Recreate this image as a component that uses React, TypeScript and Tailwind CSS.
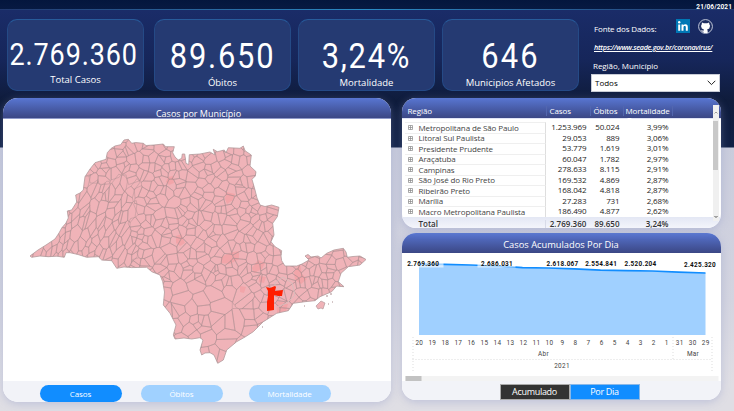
import React from 'react';

type Pt = [number, number];

const STATE: Pt[] = [
  [30, 256], [38, 250], [46, 245], [55, 239], [59, 233], [61.7, 228], [66, 223], [68.3, 218], [67.3, 211], [71.7, 210], [76.7, 202], [75.7, 195], [80, 193], [83.3, 190],
  [84, 184], [85, 176.7], [90, 169], [95, 162.7], [106, 159.3], [107.3, 152.7], [111, 148.5], [115, 146], [120.7, 144.7], [124, 140], [128.3, 139.3],
  [131.7, 143.3], [136, 142.6], [143.3, 143.3], [146, 145.5], [154, 145], [163.3, 144], [165.7, 146.7], [174.3, 146.7], [172.7, 152.7], [175, 157], [178.3, 160],
  [181.7, 158.3], [182.3, 154], [184.7, 154], [186, 163.3], [188.7, 164.7], [189.3, 154.7], [200, 154], [210, 152], [215, 155], [213.3, 149.3],
  [217.3, 151.7], [224.3, 150], [226, 152.7], [228.3, 147.7], [240, 148.3], [243.3, 146], [245, 150.7], [251.3, 155], [250, 166], [256, 171.7],
  [255.3, 176], [252, 179.3], [255, 190], [257, 198], [260, 205], [265, 206.5], [271.7, 205], [279, 207.3], [277.3, 216.7], [272.7, 223.3], [274, 235], [271, 241.7],
  [275, 246.7], [281.7, 250.7], [281, 256], [281.7, 260.7], [285, 266], [296.7, 266], [302, 264], [309, 260], [305, 256], [308, 254.5], [311, 257], [318, 256],
  [321, 258], [326.7, 253.3], [334, 250], [343.3, 248.3], [346, 252], [347.3, 257.3], [353, 256.5], [360, 256], [366, 259.5], [360, 265], [348.3, 266.7], [341, 273.3],
  [338.3, 281.7], [344, 286.7], [336.7, 286], [331.7, 291.7], [320, 296.7], [315, 300.7], [305, 301.7], [293.3, 303.3], [288.3, 310.7], [276.7, 313.3],
  [263.3, 321.7], [253.3, 331.7], [245, 337], [236.7, 341.7], [226.7, 350], [223.3, 360], [217.7, 363.3], [214, 355], [210, 352.7], [205, 353], [201.7, 355], [200, 350],
  [203, 340], [200, 337.7], [191.7, 339], [184, 338], [175, 339], [173.3, 335], [176, 325], [170, 313.3], [163.3, 305], [164.5, 292], [162.7, 281.7], [160, 275],
  [151.7, 271.7], [146.7, 267.3], [131.7, 267.6], [124, 267], [116.7, 268.3], [111.7, 260.7], [101.7, 260], [98.3, 256.7], [86.7, 257.3], [78, 254.5], [70, 252.7],
  [66, 252.7], [64.3, 257.3], [57, 256.2], [48.3, 256.7], [40, 256], [31.7, 257.3],
];

const pathOf = (p: Pt[]) => 'M' + p.map((q) => q[0].toFixed(1) + ' ' + q[1].toFixed(1)).join('L') + 'Z';

/* Municipal boundaries: cells around scattered town seats, skewed along the river valleys in the west. */
function municipalities(): string {
  let seed = 11;
  const rnd = () => {
    seed = (seed * 16807) % 2147483647;
    return seed / 2147483647;
  };
  const sites: Pt[] = [];
  let row = 0;
  for (let y = 134; y < 372; y += 7.3, row++) {
    for (let x = 24 + (row % 2) * 4; x < 374; x += 7.4) {
      const px = x + (rnd() - 0.5) * 11;
      const py = y + (rnd() - 0.5) * 11;
      const sparse = (py > 285 && px < 262 && rnd() < 0.5) || rnd() < 0.12;
      if (!sparse) sites.push([px, py]);
    }
  }
  const k = (p: Pt): number => (p[0] < 135 && p[1] > 180 ? 0.4 : 1);
  const out: string[] = [];
  for (const s of sites) {
    const w = k(s);
    let cell: Pt[] = [[s[0] - 14, s[1] - 14], [s[0] + 14, s[1] - 14], [s[0] + 14, s[1] + 14], [s[0] - 14, s[1] + 14]];
    for (const o of sites) {
      const dx = o[0] - s[0];
      const dy = o[1] - s[1];
      if ((dx === 0 && dy === 0) || Math.abs(dx) > 28 || Math.abs(dy) > 28) continue;
      const shear = w < 1 ? 0.3 : 0;
      const nx = dx + dy * shear;
      const ny = dy * w + dx * shear;
      const c = nx * (s[0] + dx / 2) + ny * (s[1] + dy / 2);
      const next: Pt[] = [];
      for (let i = 0; i < cell.length; i++) {
        const a = cell[i];
        const b = cell[(i + 1) % cell.length];
        const da = nx * a[0] + ny * a[1] - c;
        const db = nx * b[0] + ny * b[1] - c;
        if (da <= 0) next.push(a);
        if ((da < 0 && db > 0) || (da > 0 && db < 0)) {
          const t = da / (da - db);
          next.push([a[0] + (b[0] - a[0]) * t, a[1] + (b[1] - a[1]) * t]);
        }
      }
      cell = next;
    }
    if (cell.length > 2) out.push(pathOf(cell));
  }
  return out.join('');
}

const CELLS = municipalities();
const OUTLINE = pathOf(STATE);

function StateMap() {
  return (
    <svg className="block h-[262px] w-full" viewBox="3 119 388 262">
      <defs>
        <clipPath id="state"><path d={OUTLINE} /></clipPath>
      </defs>
      <path d={OUTLINE} fill="#f0b3b8" />
      <g clipPath="url(#state)">
        <g fill="#f2a5a9">
          <path d="M168 177l5 -1 1 7 -5 2 -3 -3z" />
          <path d="M176 236l5 -2 4 9 -5 3 -4 -3z" />
          <path d="M226 192l9 2 -2 6 -6 4 -2 -5z" />
          <path d="M221 257l8 -4 10 -2 0 8 -9 5 -9 -1z" />
          <path d="M252 268l6 -8 7 3 -3 6 -8 4z" />
          <path d="M294 272l6 -8 2 10 5 5 -6 5 -6 -4z" />
          <path d="M259 276l7 1 -2 6 -5 -1z" />
          <path d="M240 286l6 1 -2 6 -4 -1z" />
          <path d="M276 300l12 4 -2 7 -9 2z" />
        </g>
        <path d={CELLS} fill="none" stroke="#a88e90" strokeWidth="0.42" />
        <path d="M275 290l0 -7 8 -6 9 6 3 12 -8 8 -10 4" fill="none" stroke="#d9bcbc" strokeWidth="1" />
      </g>
      <path d={OUTLINE} fill="none" stroke="#b39a9c" strokeWidth="0.8" />
      <path d="M316 306l5 -5 4 2 -2 6 -2 -1 -3 1z" fill="#f0b3b8" stroke="#b39a9c" strokeWidth="0.7" />
      <path d="M262 327h1M304 306h1M328 304h1M332 302h1M326 296h2M330 294h2" stroke="#a98c8e" />
      <path d="M266 287l4 1 5 -2 1 1 -1 4 8 -1 -1 6 -4 0 -4 -1 0 6 0 9 -7 1 0 -9 1 -6 0 -5z" fill="#ff1e00" />
    </svg>
  );
}

const CARDS = [
  { value: '2.769.360', label: 'Total Casos', box: 'w-[137px]', num: 'mt-[18px] text-[31px] tracking-[1px] mr-[3px]', cap: 'mt-[2px]' },
  { value: '89.650', label: 'Óbitos', box: 'ml-[10px] w-[137px]', num: 'mt-[19px] text-[35.5px] tracking-[2px]', cap: 'mt-[4px]' },
  { value: '3,24%', label: 'Mortalidade', box: 'ml-[7px] w-[137px]', num: 'mt-[19px] text-[35.5px] tracking-[2px]', cap: 'mt-[4px]' },
  { value: '646', label: 'Municipios Afetados', box: 'ml-[7px] w-[137px]', num: 'mt-[19px] text-[35.5px] tracking-[2.4px]', cap: 'mt-[4px]' },
];

const ROWS = [
  ['Metropolitana de São Paulo', '1.253.969', '50.024', '3,99%'],
  ['Litoral Sul Paulista', '29.053', '889', '3,06%'],
  ['Presidente Prudente', '53.779', '1.619', '3,01%'],
  ['Araçatuba', '60.047', '1.782', '2,97%'],
  ['Campinas', '278.633', '8.115', '2,91%'],
  ['São José do Rio Preto', '169.532', '4.869', '2,87%'],
  ['Ribeirão Preto', '168.042', '4.818', '2,87%'],
  ['Marília', '27.283', '731', '2,68%'],
  ['Macro Metropolitana Paulista', '186.490', '4.877', '2,62%'],
];

function RegionTable() {
  return (
    <section className="relative flex h-[130px] flex-col overflow-hidden rounded-[14px] bg-white shadow-[0_2px_8px_#8c96c866]">
      <div className="flex h-[21px] shrink-0 items-start border-b border-[#dfe3f5] bg-linear-to-b from-[#5876d2] to-[#3b4785] pt-[8px] text-[8px] leading-[10px] tracking-[-0.1px] text-white">
        <span className="w-[144px] pl-[6px]">Região</span>
        <span className="w-[44px] border-l border-[#5266ae] pl-[3px]">Casos</span>
        <span className="w-[33px] border-l border-[#5266ae] pl-[3px]">Óbitos</span>
        <span className="w-[50px] border-x border-[#5266ae] pl-[2px]">Mortalidade</span>
      </div>
      <svg className="absolute top-[20px] left-[225px] h-[2px] w-[5px]" viewBox="0 0 5 2"><path d="M0 0h5L2.5 2z" fill="#fff" /></svg>
      <div className="flex h-[98px] shrink-0 flex-col pt-[3px]">
        {ROWS.map((r) => (
          <div key={r[0]} className="flex h-[10.5px] shrink-0 items-center text-[8px] leading-[10px] tracking-[-0.12px] text-[#252423]">
            <div className="ml-[3px] flex h-full w-[141px] items-center border-t border-r border-t-[#efefef] border-r-[#dedede] text-[#444]">
              <svg className="ml-[3px] mr-[6px] size-[5px]" viewBox="0 0 5 5"><path d="M.5 .5h4v4h-4zM2.5 .5v4M.5 2.5h4" fill="none" stroke="#888" strokeWidth=".7" /></svg>
              <span className="whitespace-nowrap">{r[0]}</span>
            </div>
            <span className="w-[41px] text-right">{r[1]}</span>
            <span className="w-[33px] text-right">{r[2]}</span>
            <span className="w-[49px] text-right">{r[3]}</span>
          </div>
        ))}
      </div>
      <div className="flex h-[11px] items-center bg-linear-to-b from-[#e3e7f4] to-[#f4f5fb] pt-[3px] text-[8px] leading-[8px] font-semibold text-[#333]">
        <span className="w-[144px] border-r border-[#d8dbe8] pl-[17px]">Total</span>
        <span className="w-[41px] text-right tracking-[0.05px] whitespace-nowrap">2.769.360</span>
        <span className="w-[33px] text-right">89.650</span>
        <span className="w-[49px] text-right">3,24%</span>
      </div>
      <div className="absolute top-[7px] right-[2px] flex h-[116px] w-[6px] flex-col items-center justify-between bg-[#f0f0f0]">
        <svg className="h-[16px] w-[6px]" viewBox="0 0 6 16"><path d="M1.5 8.5l1.5-1.5 1.5 1.5" fill="none" stroke="#888" strokeWidth=".8" /></svg>
        <div className="mb-auto h-[49px] w-[5px] bg-[#c8c8c8]" />
        <svg className="h-[9px] w-[6px]" viewBox="0 0 6 9"><path d="M1.5 4l1.5 1.5 1.5-1.5" fill="none" stroke="#555" /></svg>
      </div>
    </section>
  );
}

const DAYS = ['20', '19', '18', '17', '16', '15', '14', '13', '12', '11', '10', '9', '8', '7', '6', '5', '4', '3', '2', '1', '31', '30', '29'];
const POINTS: { x: number; y: number; t: string }[] = [
  { x: 422.7, y: 266, t: '2.769.360' },
  { x: 496.5, y: 266, t: '2.686.031' },
  { x: 562, y: 266, t: '2.618.067' },
  { x: 600.7, y: 266, t: '2.554.841' },
  { x: 640, y: 266, t: '2.520.204' },
  { x: 699.5, y: 267, t: '2.425.320' },
];

function DailyChart() {
  return (
    <svg className="block h-[128px] w-full" viewBox="401.5 253 319 128" fontFamily="Roboto, sans-serif">
      <path d="M418.5 264L444 264.3 470 265 496 266 522 267.6 548 268 574 268.8 600 270.2 626 270.7 652 271 678 272.2 705 273V335H418.5Z" fill="#a0d0ff" />
      <path d="M418.5 264L444 264.3 470 265 496 266 522 267.6 548 268 574 268.8 600 270.2 626 270.7 652 271 678 272.2 705 273" fill="none" stroke="#118dff" strokeWidth="1.7" />
      <g fill="#fff" fillOpacity=".6">
        <rect x="405" y="260" width="38" height="7.5" />
        <rect x="477" y="260" width="38" height="7.5" />
      </g>
      <g fontSize="6.4" fontWeight="700" fill="#111" textAnchor="middle" letterSpacing=".3">
        {POINTS.map((p) => <text key={p.t} x={p.x} y={p.y}>{p.t}</text>)}
      </g>
      <g fontSize="6.4" fill="#444" textAnchor="middle" letterSpacing=".3">
        {DAYS.map((d, i) => <text key={d} x={418.8 + i * 13.02} y="345">{d}</text>)}
        <text x="543" y="356">Abr</text>
        <text x="692.5" y="356">Mar</text>
        <text x="561.5" y="368.3">2021</text>
      </g>
      <path d="M412.5 337V372M711.5 337V372M672.5 337V359M412 359.5H712" fill="none" stroke="#ddd" strokeDasharray="1 2" />
      <rect x="405" y="376" width="313" height="5" fill="#f3f3f3" />
      <rect x="405" y="376" width="16" height="5" fill="#c2c2c2" />
    </svg>
  );
}

export default function App() {
  return (
    <div
      className="flex h-[411px] w-[734px] flex-col overflow-hidden bg-[linear-gradient(to_bottom,#04163d_0px,#071a42_9px,#1a2c68_10px,#16265a_60px,#0f1c3c_100px,#102045_147px,#c9ccdc_148px,#d3d4e0_300px,#dfdee4_385px,#dfdee4_411px)] font-['Open_Sans','Noto_Sans',sans-serif]"
    >
      <div className="flex h-[10px] shrink-0 justify-end pt-[3px] pr-[2px] text-[6.5px] leading-[8px] font-bold tracking-[0.1px] text-white font-[Roboto,sans-serif]">21/06/2021</div>
      <div className="h-px w-full shrink-0 -mt-px bg-linear-to-r from-[#22396f] via-[#2a8bc4] to-[#22396f]" />
      <header className="flex h-[88px] shrink-0 pt-[9px] pl-[7px]">
        {CARDS.map((c) => (
          <div key={c.label} className={`flex h-[72px] shrink-0 flex-col items-center rounded-[10px] border border-[#254a86] border-t-[#285b9a] bg-[#253a72] text-white ${c.box}`}>
            <div className={`h-[34px] scale-x-[0.87] leading-[34px] whitespace-nowrap font-[Roboto,sans-serif] ${c.num}`}>{c.value}</div>
            <div className={`text-[9.5px] leading-[12px] whitespace-nowrap ${c.cap}`}>{c.label}</div>
          </div>
        ))}
        <div className="ml-[10px] flex w-[131px] flex-col text-[8px] leading-[10px] text-white">
          <div className="flex h-[18px] items-start pl-[5px]">
            <span className="w-[82px] pt-[5px] tracking-[-0.15px]">Fonte dos Dados:</span>
            <svg className="size-[14px]" viewBox="0 0 14 14">
              <rect width="14" height="14" fill="#0077b5" />
              <circle cx="3.2" cy="3.3" r="1.2" fill="#fff" />
              <path d="M2.2 5.4h2v6.4h-2zM5.5 5.4h1.9v.9c.4-.7 1.1-1.1 2-1.1 1.9 0 2.4 1.2 2.4 3v3.6h-2V8.6c0-.9-.1-1.6-1.1-1.6s-1.2.7-1.2 1.6v3.2h-2z" fill="#fff" />
            </svg>
            <svg className="ml-[8px] size-[15px]" viewBox="0 0 16 16">
              <circle cx="8" cy="8" r="7.4" fill="#1f2f62" stroke="#c9cfdf" strokeWidth="1" />
              <path d="M4.2 3.6l2 .9h3.6l2-.9.3 1.9.8 1.8-.9 2.7-2.3 1.2.6 1.2v2.4H5.9v-1.2l-1.8-.4-.8-1.2 1.2.1.9.7.7-.9.2-.6-2.2-1.2-.9-2.7.8-1.8z" fill="#fff" />
            </svg>
          </div>
          <div className="mt-[5px] pl-[5px] text-[7.2px] tracking-[-0.28px] whitespace-nowrap underline italic font-semibold">https://www.seade.gov.br/coronavirus/</div>
          <div className="mt-[9px] pl-[4px] tracking-[-0.05px]">Região, Município</div>
          <div className="mt-[3px] ml-[2px] flex h-[18px] items-center justify-between border border-[#c8ccd6] bg-white pr-[3px] pl-[3px] text-[8px] text-black">
            <span>Todos</span>
            <svg className="h-[6px] w-[9px]" viewBox="0 0 9 6"><path d="M.7 .8l3.8 3.8L8.3 .8" fill="none" stroke="#222" strokeWidth="1" /></svg>
          </div>
        </div>
      </header>

      <main className="flex grow items-start pl-[3px]">
        <section className="flex h-[304px] w-[388px] flex-col overflow-hidden rounded-[15px] bg-white shadow-[0_2px_8px_#8c96c866]">
          <div className="h-[21px] shrink-0 border-b border-[#8e99c9] bg-linear-to-b from-[#5876d2] to-[#3b4785] pt-[10px] pl-[3px] text-center text-[9px] leading-[11px] text-white">Casos por Município</div>
          <StateMap />
          <div className="flex h-[21px] items-start bg-[#f2f3f8] pt-[4px] pl-[36.5px] text-center text-[8px] leading-[18px] tracking-[-0.1px] text-white">
            <div className="h-[17px] w-[82px] rounded-full bg-[#118dff]">Casos</div>
            <div className="ml-[19px] h-[17px] w-[82px] rounded-full bg-[#a0d1ff]">Óbitos</div>
            <div className="ml-[26px] h-[17px] w-[82px] rounded-full bg-[#a0d1ff]">Mortalidade</div>
          </div>
        </section>

        <div className="ml-[10.5px] flex w-[319px] flex-col gap-[5px]">
          <RegionTable />
          <section className="flex h-[167px] flex-col overflow-hidden rounded-[14px] bg-white shadow-[0_2px_8px_#8c96c866]">
            <div className="h-[20px] shrink-0 bg-linear-to-b from-[#5876d2] to-[#3b4785] pt-[6px] text-center text-[9.3px] leading-[12px] text-white">Casos Acumulados Por Dia</div>
            <DailyChart />
            <div className="flex h-[19px] bg-[#f2f3f8] pt-[3px] pl-[98px] text-center text-[9px] leading-[14px] text-white">
              <div className="h-[16px] w-[70px] border border-[#aaa] bg-[#333] tracking-[-0.3px]">Acumulado</div>
              <div className="h-[16px] w-[70px] border border-[#8ab8e8] bg-[#118dff] tracking-[-0.3px]">Por Dia</div>
            </div>
          </section>
        </div>
      </main>
    </div>
  );
}
